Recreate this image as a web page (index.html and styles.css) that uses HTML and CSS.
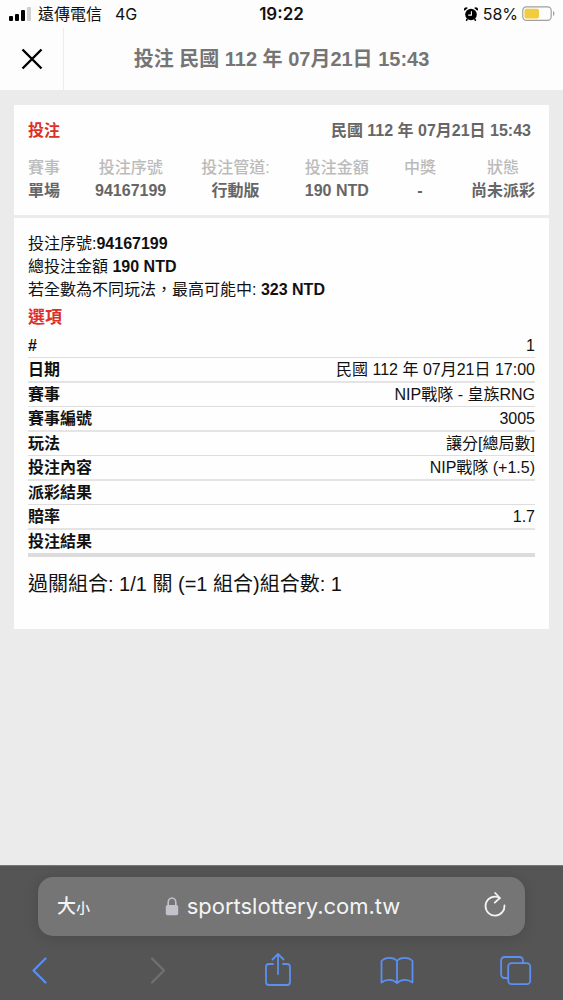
FILE: index.html
```
<!DOCTYPE html>
<html lang="zh-Hant">
<head>
<meta charset="utf-8">
<meta name="viewport" content="width=device-width, initial-scale=1">
<title>投注</title>
<link rel="stylesheet" href="styles.css">
</head>
<body>
<div class="screen">
  <div class="status">
    <div class="status-left">
      <svg class="signal" width="23" height="14" viewBox="0 0 23 14" aria-hidden="true">
        <rect x="1" y="9" width="4" height="5" rx="1"/>
        <rect x="7" y="7" width="4" height="7" rx="1"/>
        <rect x="13" y="3" width="4" height="11" rx="1"/>
        <rect class="signal-off" x="19" y="0" width="4" height="14" rx="1"/>
      </svg>
      <span class="carrier">遠傳電信</span>
      <span>4G</span>
    </div>
    <div class="clock">19:22</div>
    <div class="status-right">
      <svg class="alarm" width="14" height="15" viewBox="0 0 14 15" aria-hidden="true">
        <circle cx="7" cy="7.5" r="5.8"/>
        <path d="M.6 3.8A2 2 0 0 1 3.8 1zM13.4 3.8A2 2 0 0 0 10.2 1zM2.6 11.5l1.5 1.3-1.4 1.5-1-1zM11.4 11.5l-1.5 1.3 1.4 1.5 1-1z"/>
        <path d="M7.4 4.2v3.9H4.2" fill="none" stroke="#fff" stroke-width="1.1"/>
      </svg>
      <span>58%</span>
      <svg class="battery" width="33" height="16" viewBox="0 0 33 16" aria-hidden="true">
        <rect x=".8" y=".8" width="28.4" height="13.6" rx="3.6" fill="none" stroke="#a0a0a0" stroke-width="1.2"/>
        <rect x="2.5" y="2.7" width="14.5" height="9.8" rx="1.8" fill="#f3cb3f"/>
        <path d="M31 5.1c1.9.7 1.9 4.3 0 5z" fill="#a0a0a0"/>
      </svg>
    </div>
  </div>

  <header class="topbar">
    <button class="close" type="button" aria-label="關閉">
      <svg width="22" height="22" viewBox="0 0 22 22" aria-hidden="true"><path d="M1.5 1.5l19 19M20.5 1.5l-19 19"/></svg>
    </button>
    <h1 class="title">投注 民國 112 年 07月21日 15:43</h1>
  </header>

  <main class="content">
    <article class="ticket">
      <section class="summary">
        <div class="summary-head">
          <h2 class="red">投注</h2>
          <span>民國 112 年 07月21日 15:43</span>
        </div>
        <dl class="stats">
          <div><dt>賽事</dt><dd>單場</dd></div>
          <div><dt>投注序號</dt><dd>94167199</dd></div>
          <div><dt>投注管道:</dt><dd>行動版</dd></div>
          <div><dt>投注金額</dt><dd>190 NTD</dd></div>
          <div><dt>中獎</dt><dd>-</dd></div>
          <div><dt>狀態</dt><dd>尚未派彩</dd></div>
        </dl>
      </section>
      <section class="detail">
        <p>投注序號:<b>94167199</b></p>
        <p>總投注金額 <b>190 NTD</b></p>
        <p>若全數為不同玩法，最高可能中: <b>323 NTD</b></p>
        <h3 class="red options-title">選項</h3>
        <table class="options">
          <tbody>
            <tr><th scope="row">#</th><td>1</td></tr>
            <tr><th scope="row">日期</th><td>民國 112 年 07月21日 17:00</td></tr>
            <tr><th scope="row">賽事</th><td>NIP戰隊 - 皇族RNG</td></tr>
            <tr><th scope="row">賽事編號</th><td>3005</td></tr>
            <tr><th scope="row">玩法</th><td>讓分[總局數]</td></tr>
            <tr><th scope="row">投注內容</th><td>NIP戰隊 (+1.5)</td></tr>
            <tr><th scope="row">派彩結果</th><td></td></tr>
            <tr><th scope="row">賠率</th><td>1.7</td></tr>
            <tr><th scope="row">投注結果</th><td></td></tr>
          </tbody>
        </table>
        <p class="combo">過關組合: 1/1 關 (=1 組合)組合數: 1</p>
      </section>
    </article>
  </main>

  <footer class="browser">
    <div class="address">
      <button class="text-size" type="button" aria-label="文字大小">大<small>小</small></button>
      <div class="site">
        <svg width="14" height="20" viewBox="0 0 14 20" aria-hidden="true">
          <rect x=".8" y="8" width="12.4" height="10.2" rx="1.6" fill="#c3c2ca"/>
          <path d="M3.2 9V5.3a3.8 4.3 0 0 1 7.6 0V9" fill="none" stroke="#c3c2ca" stroke-width="1.6"/>
        </svg>
        <span>sportslottery.com.tw</span>
      </div>
      <button class="reload" type="button" aria-label="重新載入">
        <svg width="22" height="26" viewBox="0 0 22 26" fill="none" stroke="#f4f4f4" stroke-width="1.8" stroke-linecap="round" stroke-linejoin="round" aria-hidden="true">
          <path d="M20.5 13.5A9.5 9.5 0 1 1 11 4.600Q13.500 4.600 15.800 6"/><path d="M11.200 1l4.600 5-5 4.600"/>
        </svg>
      </button>
    </div>
    <nav class="tools">
      <button type="button" aria-label="返回"><svg width="34" height="36" viewBox="0 0 34 36" aria-hidden="true"><path d="M23.5 6.500L11.5 18.500l12 12" stroke-width="2.2"/></svg></button>
      <button class="off" type="button" aria-label="前進" disabled><svg width="34" height="36" viewBox="0 0 34 36" aria-hidden="true"><path d="M11 6.500l12 12-12 12" stroke-width="2.2"/></svg></button>
      <button type="button" aria-label="分享"><svg width="34" height="36" viewBox="0 0 34 36" aria-hidden="true"><path d="M12 12H7.800A3 3 0 0 0 5 15v15a3 3 0 0 0 3 3h18a3 3 0 0 0 3-3V15a3 3 0 0 0-3-3h-4M17 22V2.500M11.500 7.500l5.500-5.500 5.500 5.500"/></svg></button>
      <button type="button" aria-label="書籤"><svg width="34" height="36" viewBox="0 0 34 36" aria-hidden="true"><path d="M17 9C13.500 4.800 5.500 4.800 1.500 9V30.500C6 27 13 27 17 31C21 27 28 27 32.500 30.500V9C28.500 4.800 20.500 4.800 17 9V31"/></svg></button>
      <button type="button" aria-label="分頁"><svg width="34" height="36" viewBox="0 0 34 36" aria-hidden="true"><path d="M9 26H5.500a3.400 3.400 0 0 1-3.400-3.400V8.400A3.400 3.400 0 0 1 5.500 5h15A3.400 3.400 0 0 1 24 8.400V11"/><rect x="9.200" y="11.200" width="22" height="21" rx="3.400"/></svg></button>
    </nav>
  </footer>
</div>
</body>
</html>
```
FILE: styles.css
```
* { box-sizing: border-box; }

body {
  margin: 0;
  background: #ebebeb;
  color: #111;
  font-family: "Liberation Sans", "Noto Sans CJK TC", sans-serif;
  font-size: 16px;
  line-height: 23px;
}

h1, h2, h3, p, dl, dd { margin: 0; }

button {
  display: flex;
  align-items: center;
  justify-content: center;
  padding: 0;
  border: 0;
  background: none;
  color: inherit;
  font: inherit;
}

svg { display: block; }

.screen {
  display: flex;
  flex-direction: column;
  min-height: 100vh;
}

.status {
  display: grid;
  grid-template-columns: 1fr auto 1fr;
  align-items: center;
  height: 28px;
  padding: 0 8px;
  background: #fdfdfd;
  font-family: Inter, "Noto Sans CJK TC", sans-serif;
}

.status-left, .status-right {
  display: flex;
  align-items: center;
}

.status-right { justify-content: flex-end; }
.alarm { margin-right: 5px; }
.battery { margin-left: 4px; }
.signal-off { fill: #cfcfcf; }
.carrier { margin: 0 13px 0 7px; }

.clock {
  font-size: 17px;
  font-weight: 600;
}

.topbar {
  display: grid;
  grid-template-columns: 64px 1fr 64px;
  height: 62px;
  background: #fdfdfd;
}

.close { border-right: 1px solid #ececec; }

.close path {
  fill: none;
  stroke: #000;
  stroke-width: 2.4;
}

.title {
  align-self: center;
  color: #757575;
  font-size: 20px;
  line-height: 30px;
  text-align: center;
  white-space: nowrap;
}

.content {
  flex: 1;
  padding: 15px 14px;
}

.ticket { background: #fefefe; }

.summary {
  padding: 14px 14px 13px;
  border-bottom: 3px solid #ebebeb;
  color: #666;
  font-weight: 700;
}

.summary-head {
  display: flex;
  justify-content: space-between;
  padding-right: 4px;
}

.red {
  color: #dc3028;
  font-size: 16px;
}

.stats {
  display: flex;
  justify-content: space-between;
  margin-top: 14px;
  text-align: center;
}

.stats dt {
  color: #bbb;
  font-weight: 500;
}

.detail { padding: 14px 14px 30px; }

.options-title {
  margin: 5px 0;
  font-size: 17px;
}

.options {
  width: 100%;
  border-collapse: separate;
  border-spacing: 0;
}

.options th, .options td {
  height: 24px;
  padding: 0;
  border-bottom: 1px solid #dedede;
}

.options tr:nth-child(even) > * {
  height: 25px;
  border-bottom: 2px solid #e4e4e4;
}

.options tr:last-child > * {
  height: 27px;
  border-bottom: 4px solid #dcdcdc;
}

.options th { text-align: left; }
.options td { text-align: right; }

.combo {
  margin-top: 12px;
  font-size: 20px;
  line-height: 30px;
}

.browser {
  padding: 11px 38px 0;
  border-top: 1px solid #777;
  background: #555;
}

.address {
  display: grid;
  grid-template-columns: 60px 1fr 60px;
  height: 59px;
  border-radius: 15px;
  background: #757575;
  box-shadow: 0 2px 14px rgba(0, 0, 0, 0.14);
  color: #f4f4f4;
}

.text-size {
  align-items: baseline;
  align-self: center;
  justify-content: flex-end;
  padding: 2px 8px 0 0;
  font-size: 19px;
  font-weight: 500;
}

.text-size small { font-size: 14px; }

.reload { padding-bottom: 3px; }

.site {
  display: flex;
  align-items: center;
  justify-content: center;
  gap: 8px;
  padding-left: 2px;
  font-family: Inter, sans-serif;
  font-size: 22px;
}

.tools {
  display: flex;
  justify-content: space-between;
  margin: 0 -8px 0 -16px;
  padding: 16px 0 12px;
}

.tools svg {
  fill: none;
  stroke: #5b8ff0;
  stroke-width: 1.8;
  stroke-linecap: round;
  stroke-linejoin: round;
}

.tools .off svg { stroke: #707070; }
```
